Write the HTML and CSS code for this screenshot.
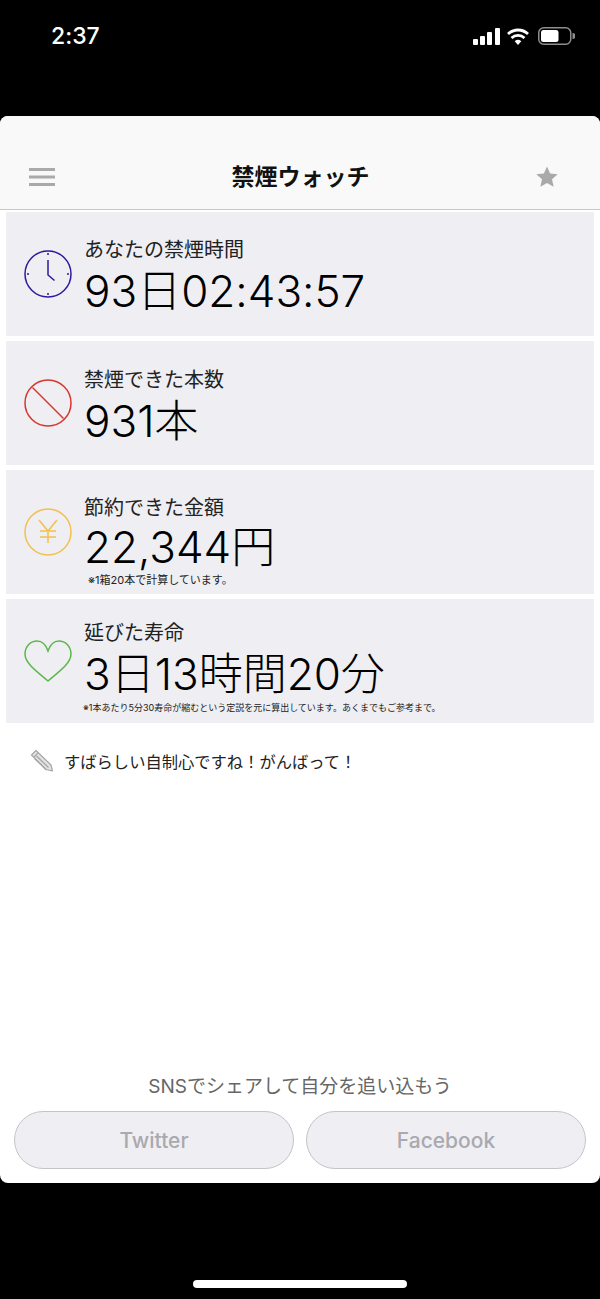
FILE: index.html
```html
<!DOCTYPE html>
<html lang="ja">
<head>
    <meta charset="UTF-8">
    <meta name="viewport" content="width=device-width,initial-scale=1.0">
    <title>禁煙ウォッチ</title>
    <link rel="stylesheet" href="styles.css">
</head>
<body>
    <div class="status-bar">
        <span class="status-time">2:37</span>
        <div class="status-icons">
            <svg width="27" height="17" viewBox="0 0 27 17" fill="#fff">
                <rect x="0" y="11" width="5" height="6" rx="1"/>
                <rect x="7" y="8" width="5" height="9" rx="1"/>
                <rect x="14" y="4" width="5" height="13" rx="1"/>
                <rect x="22" y="0" width="5" height="17" rx="1"/>
            </svg>
            <svg class="status-wifi" width="22" height="17" viewBox="0 0 22 17" fill="none" stroke="#fff" stroke-width="2.800">
                <path d="M1 6a14.500 14.500 0 0 1 20 0"/>
                <path d="M4.500 10a9.500 9.500 0 0 1 13 0"/>
                <path d="M11 17l-3.300-3.800a5 5 0 0 1 6.600 0z" fill="#fff" stroke="none"/>
            </svg>
            <svg width="37" height="18" viewBox="0 0 37 18">
                <rect x="0.750" y="0.750" width="32" height="16.500" rx="5" fill="none" stroke="#8e8e8e" stroke-width="1.500"/>
                <rect x="3" y="3" width="17.500" height="12" rx="2.500" fill="#fff"/>
                <path d="M34.500 6a3 3 0 0 1 0 6z" fill="#8e8e8e"/>
            </svg>
        </div>
    </div>

    <main class="app">
        <header class="nav">
            <svg class="nav-menu" width="26" height="18" viewBox="0 0 26 18" fill="#a9a9a9">
                <rect y="0" width="26" height="3"/>
                <rect y="7.500" width="26" height="3"/>
                <rect y="15" width="26" height="3"/>
            </svg>
            <h1 class="nav-title">禁煙ウォッチ</h1>
            <svg class="nav-star" width="22" height="22" viewBox="0 0 24 24" fill="#a9a9a9">
                <path d="M12 0.500l3.400 7.600 8.200 0.900-6.100 5.500 1.700 8.100-7.200-4.100-7.200 4.100 1.700-8.100-6.100-5.500 8.200-0.900z"/>
            </svg>
        </header>

        <section class="stats">
            <div class="stat stat-time">
                <svg class="stat-icon" width="48" height="48" viewBox="0 0 48 48" fill="none" stroke="#2e1a9c" stroke-width="1.500">
                    <circle cx="24" cy="24" r="23"/>
                    <path d="M24 10v15l6.500 5.500"/>
                    <path d="M24 3v2M24 43v2M3 24h2M43 24h2"/>
                </svg>
                <div class="stat-body">
                    <div class="stat-label">あなたの禁煙時間</div>
                    <div class="stat-value">93日02:43:57</div>
                </div>
            </div>
            <div class="stat stat-count">
                <svg class="stat-icon" width="48" height="48" viewBox="0 0 48 48" fill="none" stroke="#d8352c" stroke-width="1.500">
                    <circle cx="24" cy="24" r="23"/>
                    <path d="M8.500 8.500l31 31"/>
                </svg>
                <div class="stat-body">
                    <div class="stat-label">禁煙できた本数</div>
                    <div class="stat-value">931本</div>
                </div>
            </div>
            <div class="stat stat-money">
                <svg class="stat-icon" width="48" height="48" viewBox="0 0 48 48" fill="none" stroke="#f2c14e" stroke-width="1.500">
                    <circle cx="24" cy="24" r="23"/>
                    <path d="M15 12l9 11 9-11M24 23v12M16 23h16M16 29h16"/>
                </svg>
                <div class="stat-body">
                    <div class="stat-label">節約できた金額</div>
                    <div class="stat-value">22,344円</div>
                    <div class="stat-note">※1箱20本で計算しています。</div>
                </div>
            </div>
            <div class="stat stat-life">
                <svg class="stat-icon" width="48" height="42" viewBox="0 0 48 42" fill="none" stroke="#5cb84a" stroke-width="1.500">
                    <path d="M24 41C15 33 1 24 1 14 1 6 7 1 13 1 18 1 22 5 24 11 26 5 30 1 35 1 41 1 47 6 47 14 47 24 33 33 24 41z"/>
                </svg>
                <div class="stat-body">
                    <div class="stat-label">延びた寿命</div>
                    <div class="stat-value">3日13時間20分</div>
                    <div class="stat-note">※1本あたり5分30寿命が縮むという定説を元に算出しています。あくまでもご参考まで。</div>
                </div>
            </div>
        </section>

        <p class="message">
            <svg width="24" height="24" viewBox="0 0 24 24" stroke="#a6a6a6" stroke-width="1.200" stroke-linejoin="round">
                <path d="M1.500 6l4.500-4.500 15 14.500 1.500 6-6.500-1.500z" fill="#e2e2e2"/>
                <path d="M3.700 8.300l4.500-4.500M6.500 7l12 11.500M4.500 9.500l12 11.500" fill="none"/>
            </svg>
            <span>すばらしい自制心ですね！がんばって！</span>
        </p>

        <footer class="share">
            <p class="share-title">SNSでシェアして自分を追い込もう</p>
            <div class="share-buttons">
                <button class="share-btn">Twitter</button>
                <button class="share-btn">Facebook</button>
            </div>
        </footer>
    </main>

    <div class="home-bar"><span class="home-indicator"></span></div>
</body>
</html>
```

FILE: styles.css
```css
:root {
    --row-bg: #eeeef3;
    --ink: #111;
    --muted: #a9a9ae;
    --jp: Inter, 'Noto Sans CJK JP', sans-serif;
}
html, body {
    margin: 0;
    padding: 0;
    background: #000;
    font-family: var(--jp);
    font-feature-settings: "calt" 0;
    color: var(--ink);
}
body {
    width: 600px;
    height: 1299px;
    display: flex;
    flex-direction: column;
    overflow: hidden;
}
.status-bar {
    height: 116px;
    flex-shrink: 0;
    display: flex;
    justify-content: space-between;
    align-items: flex-start;
    padding: 21px 25px 0 51px;
    box-sizing: border-box;
    color: #fff;
}
.status-time {
    font-size: 23px;
    font-weight: 500;
    line-height: 30px;
}
.status-icons {
    display: flex;
    align-items: center;
    gap: 7px;
    height: 30px;
}
.status-wifi {
    margin-right: 2px;
}
.app {
    height: 1067px;
    flex-shrink: 0;
    background: #fff;
    border-radius: 8px;
    display: flex;
    flex-direction: column;
    overflow: hidden;
}
.nav {
    height: 94px;
    box-sizing: border-box;
    background: #f9f9f9;
    border-bottom: 1px solid #c8c8c8;
    display: grid;
    grid-template-columns: 1fr auto 1fr;
    align-items: center;
    padding: 28px 42px 0 29px;
}
.nav-star {
    justify-self: end;
}
.nav-title {
    margin: 0 0 4px;
    font-size: 23px;
    font-weight: 700;
    position: relative;
    left: 7px;
}
.stats {
    display: flex;
    flex-direction: column;
    gap: 5px;
    padding: 2px 6px 0;
}
.stat {
    height: 124px;
    background: var(--row-bg);
    display: flex;
    align-items: center;
    padding-left: 18px;
    gap: 12px;
}
.stat-icon {
    width: 48px;
    flex-shrink: 0;
}
.stat-body {
    flex: 1;
    min-width: 0;
    align-self: flex-start;
    padding-top: 25px;
}
.stat-count .stat-body {
    padding-top: 26px;
}
.stat-life .stat-body {
    padding-top: 21px;
}
.stat-label {
    font-size: 20px;
    line-height: 26px;
    color: #222;
}
.stat-value {
    font-size: 44px;
    font-weight: 300;
    line-height: 56px;
    color: #000;
}
.stat-money .stat-value {
    margin-top: -2px;
}
.stat-note {
    font-size: 11px;
    line-height: 14px;
    margin: -2px 0 0 4px;
    color: #222;
    white-space: nowrap;
}
.stat-life .stat-note {
    font-size: 9px;
    margin: -1px 0 0 -1px;
}
.message {
    margin: 26px 0 0 30px;
    display: flex;
    align-items: center;
    gap: 10px;
    font-size: 16.300px;
    color: #222;
}
.share {
    margin-top: auto;
    padding: 0 14px 14px;
}
.share-title {
    margin: 0 0 13px;
    text-align: center;
    font-size: 19px;
    color: #666;
}
.share-buttons {
    display: grid;
    grid-template-columns: 280px 280px;
    gap: 12px;
}
.share-btn {
    height: 58px;
    background: var(--row-bg);
    border: 1px solid #c4c4c8;
    border-radius: 29px;
    font-family: var(--jp);
    font-size: 21px;
    font-weight: 500;
    color: var(--muted);
}
.home-bar {
    flex: 1;
    display: flex;
    justify-content: center;
    align-items: flex-end;
    padding-bottom: 11px;
}
.home-indicator {
    width: 214px;
    height: 8px;
    border-radius: 4px;
    background: #fff;
}
```
